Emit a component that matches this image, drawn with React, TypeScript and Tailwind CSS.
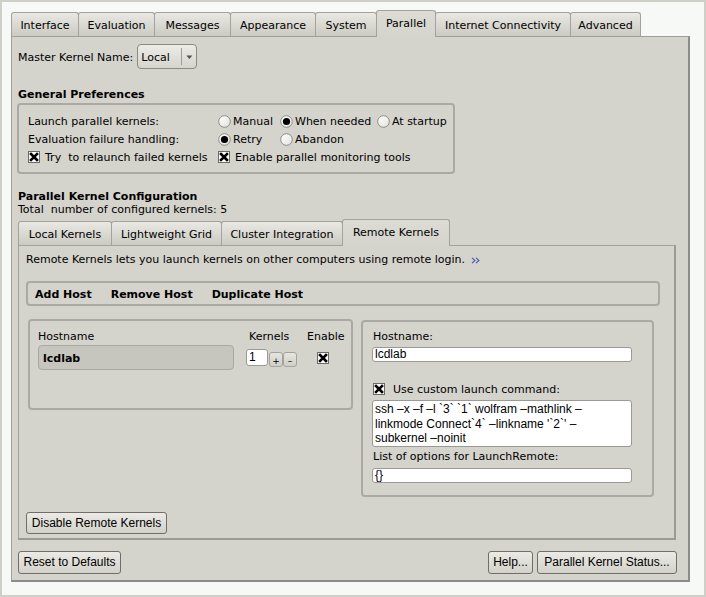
import React from 'react';

/* ─── Top-level and nested tab strips ─── */
const TOP_TABS: [string, number][] = [
  ['Interface', 68],
  ['Evaluation', 77],
  ['Messages', 77],
  ['Appearance', 86],
  ['System', 62],
  ['Parallel', 60],
  ['Internet Connectivity', 136],
  ['Advanced', 71],
];

const SUB_TABS: [string, number][] = [
  ['Local Kernels', 94],
  ['Lightweight Grid', 111],
  ['Cluster Integration', 122],
  ['Remote Kernels', 108],
];

function Tab({ label, w, on }: { label: string; w: number; on?: boolean }) {
  if (on) {
    return (
      <div
        className="relative z-10 -mb-px -ml-px flex h-[27px] items-center justify-center rounded-t-[3px] border border-b-0 border-[#a3a29c] bg-linear-to-b from-[#dcdcd5] to-[#d4d3cc] pb-px"
        style={{ width: w }}
      >
        {label}
      </div>
    );
  }
  return (
    <div
      className="-ml-px flex h-[24px] items-center justify-center rounded-t-[3px] border border-b-0 border-[#a3a29c] bg-linear-to-b from-[#e9e8e2] to-[#cbcac3] pt-px first:ml-0"
      style={{ width: w }}
    >
      {label}
    </div>
  );
}

function Check() {
  return (
    <svg width="12" height="12" viewBox="0 0 12 12" className="shrink-0">
      <rect x="0.5" y="0.5" width="11" height="11" fill="#fff" stroke="#6b6b66" />
      <path d="M3 3L9 9M9 3L3 9" stroke="#000" strokeWidth="2.6" strokeLinecap="square" />
    </svg>
  );
}

function Radio({ on }: { on?: boolean }) {
  return (
    <svg width="13" height="13" viewBox="0 0 13 13" className="shrink-0">
      <defs>
        <linearGradient id="rg" x1="0" y1="0" x2="1" y2="1">
          <stop offset="0" stopColor="#ffffff" />
          <stop offset="1" stopColor="#e2e2dc" />
        </linearGradient>
      </defs>
      <circle cx="6.5" cy="6.5" r="5.8" fill="url(#rg)" stroke="#8c8b86" strokeWidth="1" />
      {on && <circle cx="6.5" cy="6.5" r="3.6" fill="#000" />}
    </svg>
  );
}

function Btn({ children, w, h = 23 }: { children: React.ReactNode; w: number; h?: number }) {
  return (
    <div
      className="flex items-center justify-center rounded-[3px] border border-[#6f6e6a] bg-linear-to-b from-[#ebeae4] to-[#d2d1ca] font-['Liberation_Sans',sans-serif] text-[12px]"
      style={{ width: w, height: h }}
    >
      {children}
    </div>
  );
}

export default function App() {
  return (
    <div className="h-[597px] w-[706px] bg-[#cfcfc8] p-[2px] font-['DejaVu_Sans',sans-serif] text-[11px] leading-[13px] text-black">
      <div className="h-full w-full bg-[#f6f9f6] pl-[9px] pt-[8px]">
        {/* top tabs */}
        <div className="flex h-[26px] items-end">
          {TOP_TABS.map(([l, w]) => (
            <Tab key={l} label={l} w={w} on={l === 'Parallel'} />
          ))}
        </div>

        {/* main panel */}
        <div className="flex h-[546px] w-[679px] flex-col border-l border-t border-[#a09f99] border-r-2 border-b-2 border-r-[#8d8c87] border-b-[#8d8c87] bg-[#d4d3cc] pl-[6px] pt-[7px]">
          {/* master kernel */}
          <div className="flex h-[25px] items-center">
            <span className="pt-[2px]">Master Kernel Name:</span>
            <div className="ml-[4px] flex h-[25px] w-[60px] items-center rounded-[4px] border border-[#8b8a85] bg-linear-to-b from-[#ecebe5] to-[#d5d4cd]">
              <span className="w-[43px] pl-[3px] pt-[2px]">Local</span>
              <div className="my-[3px] w-px self-stretch bg-[#9e9d97]" />
              <svg width="15" height="8" viewBox="0 0 15 8">
                <path d="M4.5 2.5H10.5L7.5 6Z" fill="#505050" />
              </svg>
            </div>
          </div>

          <div className="mt-[19px] font-bold">General Preferences</div>

          <div className="-ml-px mt-[2px] w-[438px] rounded-[4px] border-2 border-[#aaa9a3] pb-[6px] pl-[9px] pt-[7px]">
            <div className="flex h-[18px] items-center">
              <span className="w-[190px]">Launch parallel kernels:</span>
              <span className="flex w-[62px] items-center gap-[2px]"><Radio />Manual</span>
              <span className="flex w-[97px] items-center gap-[2px]"><Radio on />When needed</span>
              <span className="flex items-center gap-[2px]"><Radio />At startup</span>
            </div>
            <div className="flex h-[18px] items-center">
              <span className="w-[190px]">Evaluation failure handling:</span>
              <span className="flex w-[62px] items-center gap-[2px]"><Radio on />Retry</span>
              <span className="flex items-center gap-[2px]"><Radio />Abandon</span>
            </div>
            <div className="flex h-[18px] items-center">
              <span className="flex w-[190px] items-center gap-[5px]"><Check />Try&nbsp; to relaunch failed kernels</span>
              <span className="flex items-center gap-[5px]"><Check />Enable parallel monitoring tools</span>
            </div>
          </div>

          <div className="mt-[16px] font-bold">Parallel Kernel Configuration</div>
          <div>Total&nbsp; number of configured kernels: 5</div>

          {/* sub tabs */}
          <div className="mt-[3px] flex h-[26px] items-end">
            {SUB_TABS.map(([l, w]) => (
              <Tab key={l} label={l} w={w} on={l === 'Remote Kernels'} />
            ))}
          </div>

          {/* sub panel */}
          <div className="flex h-[295px] w-[658px] flex-col border-l border-t border-[#a3a29c] border-r-2 border-b-2 border-r-[#9b9a94] border-b-[#9b9a94] pl-[7px] pt-[7px]">
            <div className="flex items-center">
              <span>Remote Kernels lets you launch kernels on other computers using remote login.</span>
              <svg width="10" height="7" viewBox="0 0 10 7" className="ml-[6px] mt-[1px]">
                <path d="M1 0.8L4 3.5L1 6.2M5 0.8L8 3.5L5 6.2" fill="none" stroke="#4458b4" strokeWidth="1.1" />
              </svg>
            </div>

            <div className="mt-[15px] flex h-[25px] w-[634px] items-center gap-[19px] rounded-[4px] border-2 border-[#aaa9a3] pl-[7px] pt-px font-bold">
              <span>Add Host</span>
              <span>Remove Host</span>
              <span>Duplicate Host</span>
            </div>

            <div className="ml-[2px] mt-[13px] flex items-start">
              {/* host list */}
              <div className="h-[91px] w-[325px] rounded-[4px] border-2 border-[#aaa9a3] pl-[8px] pt-[9px]">
                <div className="flex">
                  <span className="w-[211px]">Hostname</span>
                  <span className="w-[58px]">Kernels</span>
                  <span>Enable</span>
                </div>
                <div className="mt-[2px] flex h-[25px] items-center">
                  <div className="flex h-[25px] w-[196px] items-center rounded-[4px] border border-[#a9a8a2] bg-[#c6c5be] pl-[4px] pt-px font-bold">
                    lcdlab
                  </div>
                  <div className="ml-[12px] flex h-[17px] w-[22px] items-center rounded-[3px] border border-[#9a9994] bg-white pl-[2px] font-['Liberation_Sans',sans-serif] text-[12px]">
                    1
                  </div>
                  <div className="ml-px mt-[3px] flex h-[15px] w-[14px] items-end justify-center rounded-[3px] border border-[#a3a29c] bg-linear-to-b from-[#e6e5df] to-[#cfcec7] text-[9px] leading-[10px]">
                    +
                  </div>
                  <div className="mt-[3px] flex h-[15px] w-[14px] items-end justify-center rounded-[3px] border border-[#a3a29c] bg-linear-to-b from-[#e6e5df] to-[#cfcec7] text-[9px] leading-[10px]">
                    –
                  </div>
                  <span className="ml-[20px]"><Check /></span>
                </div>
              </div>

              {/* host details */}
              <div className="ml-[8px] mt-px h-[177px] w-[293px] rounded-[4px] border-2 border-[#aaa9a3] pl-[9px] pt-[8px]">
                <div className="ml-px">Hostname:</div>
                <div className="mt-[4px] flex h-[15px] w-[260px] items-center rounded-[3px] border border-[#9a9994] bg-white pl-[2px] font-['Liberation_Sans',sans-serif] text-[12px]">
                  lcdlab
                </div>
                <div className="ml-px mt-[20px] flex h-[14px] items-center gap-[8px]">
                  <Check />
                  <span>Use custom launch command:</span>
                </div>
                <div className="mt-[4px] h-[47px] w-[260px] rounded-[3px] border border-[#9a9994] bg-white pl-[2px] pt-[1px] font-['Liberation_Sans',sans-serif] text-[12px] leading-[14.5px]">
                  <div>ssh –x –f –l `3` `1` wolfram –mathlink –</div>
                  <div>linkmode Connect`4` –linkname '`2`' –</div>
                  <div>subkernel –noinit</div>
                </div>
                <div className="ml-px mt-[3px]">List of options for LaunchRemote:</div>
                <div className="mt-[5px] flex h-[15px] w-[260px] items-center rounded-[3px] border border-[#9a9994] bg-white pl-[2px] font-['Liberation_Sans',sans-serif] text-[12px]">
                  {'{}'}
                </div>
              </div>
            </div>

            <div className="mb-[4px] mt-auto">
              <Btn w={141} h={22}>Disable Remote Kernels</Btn>
            </div>
          </div>

          {/* bottom buttons */}
          <div className="mt-[11px] flex w-[659px] items-center">
            <Btn w={103}>Reset to Defaults</Btn>
            <div className="ml-auto flex gap-[4px]">
              <Btn w={45}>Help...</Btn>
              <Btn w={140}>Parallel Kernel Status...</Btn>
            </div>
          </div>
        </div>
      </div>
    </div>
  );
}
